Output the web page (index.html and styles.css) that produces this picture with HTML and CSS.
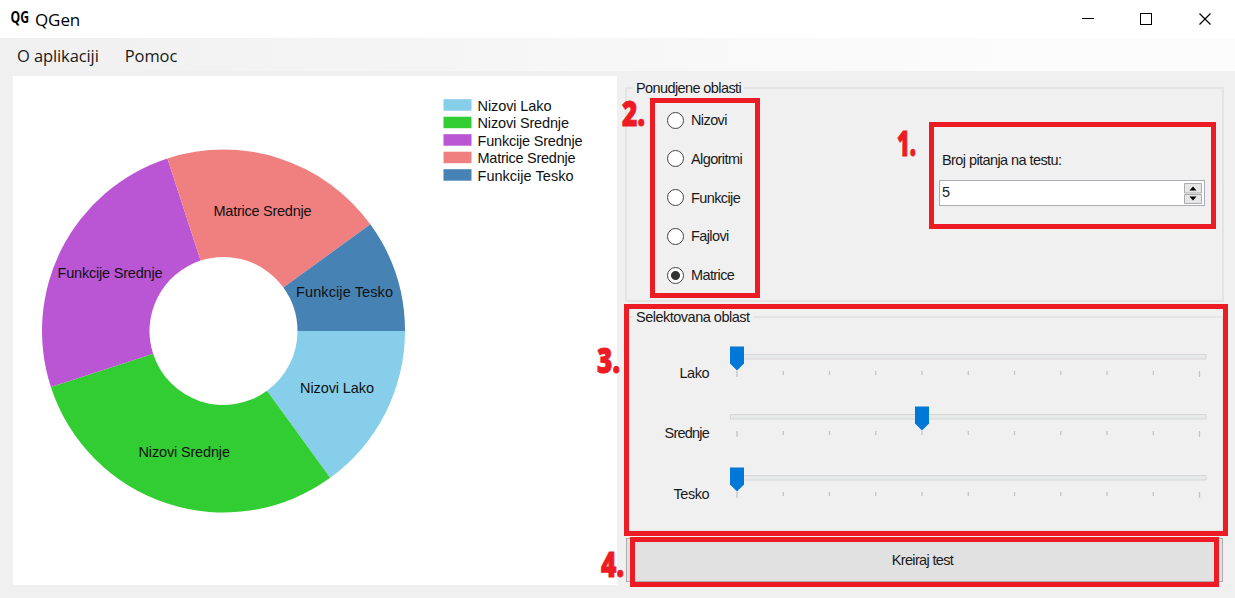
FILE: index.html
```html
<!DOCTYPE html>
<html lang="sr">
<head>
<meta charset="utf-8">
<title>QGen</title>
<link rel="stylesheet" href="styles.css">
</head>
<body>
<div class="window">
  <header class="titlebar">
    <svg class="logo" width="20" height="28"><text x="0.5" y="18.500" textLength="18.500" lengthAdjust="spacingAndGlyphs">QG</text></svg>
    <span class="title">QGen</span>
    <svg class="controls" width="132" height="14" fill="none" stroke="#000" shape-rendering="crispEdges">
      <path d="M0 6.500H12M58.500 1.500h11v11h-11z"/>
      <path d="M117.500 1.500l11 11M128.500 1.500l-11 11" shape-rendering="auto" stroke-width="1.200"/>
    </svg>
  </header>
  <nav class="menubar"><span class="menu-about">O aplikaciji</span><span>Pomoc</span></nav>
  <main class="content">
    <section class="chart">
      <svg width="604" height="509" viewBox="13 76 604 509">
        <path fill="#87ceeb" d="M405 331A181.500 181.500 0 0 1 330.180 477.840L267 390.870A74 74 0 0 0 297.500 331Z"/>
        <path fill="#32cd32" d="M330.180 477.840A181.500 181.500 0 0 1 50.880 387.090L153.120 353.870A74 74 0 0 0 267 390.870Z"/>
        <path fill="#ba55d3" d="M50.880 387.090A181.500 181.500 0 0 1 167.410 158.380L200.630 260.620A74 74 0 0 0 153.120 353.870Z"/>
        <path fill="#f08080" d="M167.410 158.380A181.500 181.500 0 0 1 370.340 224.320L283.370 287.500A74 74 0 0 0 200.630 260.620Z"/>
        <path fill="#4682b4" d="M370.340 224.320A181.500 181.500 0 0 1 405 331L297.500 331A74 74 0 0 0 283.370 287.500Z"/>
        <g class="chart-text">
          <text x="213.500" y="215.500" textLength="98">Matrice Srednje</text>
          <text x="57.500" y="278" textLength="105">Funkcije Srednje</text>
          <text x="296" y="297" textLength="97">Funkcije Tesko</text>
          <text x="300" y="393" textLength="74">Nizovi Lako</text>
          <text x="138.500" y="456.500" textLength="91.500">Nizovi Srednje</text>
          <text x="477.500" y="110.500" textLength="74">Nizovi Lako</text>
          <text x="477.500" y="128" textLength="91.500">Nizovi Srednje</text>
          <text x="477.500" y="145.500" textLength="105">Funkcije Srednje</text>
          <text x="477.500" y="163" textLength="98">Matrice Srednje</text>
          <text x="477.500" y="180.500" textLength="96">Funkcije Tesko</text>
        </g>
        <rect x="443.500" y="99.200" width="28" height="11.500" fill="#87ceeb"/>
        <rect x="443.500" y="116.700" width="28" height="11.500" fill="#32cd32"/>
        <rect x="443.500" y="134.200" width="28" height="11.500" fill="#ba55d3"/>
        <rect x="443.500" y="151.700" width="28" height="11.500" fill="#f08080"/>
        <rect x="443.500" y="169.200" width="28" height="11.500" fill="#4682b4"/>
      </svg>
    </section>
    <section class="side">
      <fieldset class="group areas">
        <legend>Ponudjene oblasti</legend>
        <div class="radios">
          <label><i class="radio"></i>Nizovi</label>
          <label><i class="radio"></i>Algoritmi</label>
          <label><i class="radio"></i>Funkcije</label>
          <label><i class="radio"></i>Fajlovi</label>
          <label><i class="radio on"></i>Matrice</label>
        </div>
        <div class="count">
          <span class="count-label">Broj pitanja na testu:</span>
          <div class="spinner">
            <span>5</span>
            <svg width="19" height="23"><path fill="#e6e6e6" stroke="#acacac" d="M.500 1.500h17v9.500h-17zM.500 12.500h17v9h-17z"/><path d="M5.500 8.500h7l-3.500-4zM5.500 14.500h7l-3.500 4z"/></svg>
          </div>
        </div>
      </fieldset>
      <fieldset class="group levels">
        <legend>Selektovana oblast</legend>
        <div class="level"><span>Lako</span>
          <svg width="478" height="36"><use href="#scale"/><use href="#thumb" x="0"/></svg></div>
        <div class="level last-gap"><span class="wide">Srednje</span>
          <svg width="478" height="36"><use href="#scale"/><use href="#thumb" x="185"/></svg></div>
        <div class="level"><span>Tesko</span>
          <svg width="478" height="36"><use href="#scale"/><use href="#thumb" x="0"/></svg></div>
      </fieldset>
      <button class="create">Kreiraj test</button>
    </section>
  </main>
  <div class="mark m1"></div><div class="mark m2"></div><div class="mark m3"></div><div class="mark m4"></div>
  <svg class="numbers" width="1235" height="598">
    <text x="897" y="155.500" textLength="19" lengthAdjust="spacingAndGlyphs">1.</text>
    <text x="622" y="125.500" textLength="23" lengthAdjust="spacingAndGlyphs">2.</text>
    <text x="597" y="372.500" textLength="23" lengthAdjust="spacingAndGlyphs">3.</text>
    <text x="601" y="576.500" textLength="23" lengthAdjust="spacingAndGlyphs">4.</text>
  </svg>
  <svg class="defs" width="0" height="0">
    <defs>
      <g id="scale">
        <rect x=".5" y="10.500" width="475.500" height="4.500" fill="#e7eaea" stroke="#d6d6d6"/>
        <path d="M7 27v6M469.500 27v6" stroke="#c4c4c4" stroke-width="1.300"/>
        <path d="M53.300 27v4M99.500 27v4M145.800 27v4M192 27v4M238.300 27v4M284.500 27v4M330.800 27v4M377 27v4M423.300 27v4" stroke="#c4c4c4" stroke-width="1.300"/>
      </g>
      <path id="thumb" d="M0 2.500h14v17l-7 7-7-7z" fill="#0078d7"/>
    </defs>
  </svg>
</div>
</body>
</html>
```
FILE: styles.css
```css
* { box-sizing: border-box; }
body { margin: 0; font-family: "Liberation Sans", Arial, sans-serif; font-size: 14.5px; color: #1a1a1a; }
.window { position: relative; width: 1235px; height: 598px; overflow: hidden; background: #f0f0f0; }
.titlebar { display: flex; align-items: center; height: 38px; padding: 0 21px 0 10px; background: #fff; }
.logo { margin-bottom: 2px; overflow: visible; font: 700 16px "Open Sans", sans-serif; }
.title { margin-left: 5px; font: 17px "Open Sans", sans-serif; letter-spacing: -.1px; color: #000; }
.controls { margin-left: auto; }
.menubar { display: flex; align-items: center; gap: 26px; height: 33px; padding: 2px 0 0 17px; background: linear-gradient(90deg, #f0f0f0, #fcfcfc 85%, #fcfcfc); font: 16.5px "Open Sans", sans-serif; letter-spacing: -.1px; }
.content { display: flex; gap: 8px; padding: 5px 11px 0 13px; }
.chart { width: 604px; height: 509px; background: #fff; }
.chart svg { display: block; }
.chart-text { font: 14.5px "Liberation Sans", Arial, sans-serif; fill: #111; }
.side { display: flex; flex-direction: column; flex: 1; padding-top: 3px; }
.group { position: relative; margin: 0; padding: 0; border: 2px solid #e4e4e4; min-width: 0; }
.group legend { height: 18px; margin-left: 6px; padding: 0 3px; line-height: 18px; letter-spacing: -.6px; }
.levels legend { letter-spacing: -.5px; }
.areas { height: 223px; display: flex; justify-content: space-between; }
.radios { display: flex; flex-direction: column; gap: 16.8px; padding: 12px 0 0 40px; letter-spacing: -.6px; }
.radios label { display: flex; align-items: center; gap: 7px; height: 22px; }
.radio { width: 17px; height: 17px; border: 1.5px solid #444; border-radius: 50%; background: #fff; }
.radio.on { background: radial-gradient(circle, #333 0 4px, #fff 5px); }
.count { width: 266px; margin-right: 17px; padding-top: 53px; }
.count-label { display: block; height: 30px; padding-left: 3px; line-height: 20px; letter-spacing: -.58px; }
.spinner { display: flex; align-items: center; justify-content: space-between; height: 26px; padding: 0 1px 0 2px; border: 1.5px solid #abadb3; background: #fff; }
.spinner span { padding-bottom: 3px; }
.levels { height: 224px; margin-top: 6px; }
.level { display: flex; height: 60px; padding-left: 2px; }
.last-gap { height: 61px; }
.level:nth-of-type(1) { margin-top: 18px; }
.level span { width: 80px; margin-right: 21px; padding-top: 20px; text-align: right; line-height: 18px; letter-spacing: -.5px; }
.level .wide { padding-top: 20px; letter-spacing: -.8px; }
.create { height: 44px; margin: 6px 1px 0 1px; padding-right: 10px; border: 1.5px solid #adadad; background: #e1e1e1; font: inherit; color: #1a1a1a; letter-spacing: -.65px; }
.mark { position: absolute; border: 5px solid #ed1c24; }
.m1 { left: 929px; top: 122px; width: 287px; height: 107px; }
.m2 { left: 650px; top: 98px; width: 110px; height: 200px; }
.m3 { left: 624px; top: 304px; width: 604px; height: 232px; }
.m4 { left: 630px; top: 537px; width: 589px; height: 50px; }
.numbers { position: absolute; left: 0; top: 0; font: 800 35px "Open Sans", sans-serif; fill: #ed1c24; stroke: #ed1c24; stroke-width: 1px; }
.defs { position: absolute; }
```
